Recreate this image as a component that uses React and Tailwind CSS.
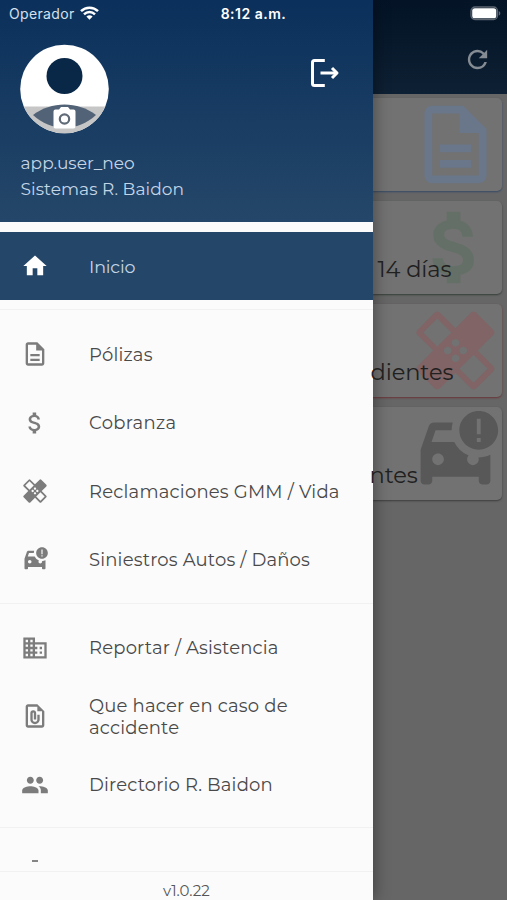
import React from 'react'
import {
  MdHome,
  MdOutlineDescription,
  MdAttachMoney,
  MdHealing,
  MdCarCrash,
  MdBusiness,
  MdOutlineFilePresent,
  MdPeople,
  MdRefresh
} from 'react-icons/md'

const policyItems = [
  { label: 'Pólizas', icon: MdOutlineDescription, text: 'tracking-[0.2px]' },
  { label: 'Cobranza', icon: MdAttachMoney, text: 'tracking-[0.3px]' },
  { label: 'Reclamaciones GMM / Vida', icon: MdHealing, text: 'tracking-[0.22px]' },
  { label: 'Siniestros Autos / Daños', icon: MdCarCrash, text: 'tracking-[0.18px]' }
]

const helpItems = [
  { label: 'Reportar / Asistencia', icon: MdBusiness, text: 'tracking-[0.18px]' },
  { label: 'Que hacer en caso de accidente', icon: MdOutlineFilePresent, text: 'tracking-[0.2px]' },
  { label: 'Directorio R. Baidon', icon: MdPeople, text: 'tracking-[0.18px]' }
]

function StatusBar() {
  return (
    <div className="absolute inset-x-0 top-0 z-20 grid h-[26px] grid-cols-3 items-center pl-[9px] pr-[6px] font-[Inter,sans-serif] text-white">
      <div className="flex items-center gap-[5px]">
        <span className="pt-px text-[14px] tracking-[0.35px] text-[#d5e0ec]">Operador</span>
        <svg className="h-[14px] w-[19px]" viewBox="0 0 19 14" fill="none" stroke="white" strokeWidth="2.5">
          <path d="M1 5.1a12.2 12.2 0 0 1 17 0" />
          <path d="M4 8.3a7.9 7.9 0 0 1 11 0" />
          <path d="M9.5 13.8 6.4 10.6a4.5 4.5 0 0 1 6.2 0z" fill="white" stroke="none" />
        </svg>
      </div>
      <span className="-ml-[3px] pt-px text-center text-[14px] font-semibold tracking-[0.5px]">8:12 a.m.</span>
      <div className="flex justify-end">
        <svg className="h-[15px] w-[31px]" viewBox="0 0 31 15">
          <rect x="1" y="1" width="26.5" height="12.5" rx="4" fill="none" stroke="#5d6671" strokeWidth="1.3" />
          <rect x="2.2" y="2.2" width="24.1" height="10.1" rx="2.6" fill="white" />
          <path d="M28.8 5v4.6c2-.8 2-3.8 0-4.6z" fill="#5d6671" />
        </svg>
      </div>
    </div>
  )
}

function Avatar() {
  return (
    <svg className="h-[90px] w-[90px]" viewBox="0 0 90 90">
      <defs>
        <clipPath id="avatar">
          <circle cx="44.5" cy="45" r="44.3" />
        </clipPath>
      </defs>
      <g clipPath="url(#avatar)">
        <rect width="90" height="90" fill="white" />
        <circle cx="44.5" cy="32" r="18" fill="#092848" />
        <rect y="62.5" width="90" height="28" fill="#c6c6c6" />
        <path d="M13 71C31 57 58 57 76 71 58 88 31 88 13 71z" fill="#536377" />
        <path d="M33.5 67.5q0-2 2-2h3.5l2-2.5h7l2 2.5h3.5q2 0 2 2v15q0 2-2 2h-18q-2 0-2-2z" fill="white" />
        <circle cx="44.5" cy="75" r="4.7" fill="white" stroke="#606b77" strokeWidth="2.2" />
      </g>
    </svg>
  )
}

function MenuItem({ item }) {
  const Icon = item.icon
  return (
    <div className="flex h-[68.5px] items-center pl-[21px]">
      <Icon className="h-7 w-7 shrink-0 text-[#7c7c7c]" />
      <span className={`ml-10 w-[262px] pt-px text-[18px] leading-[22px] text-[#494949] ${item.text}`}>{item.label}</span>
    </div>
  )
}

function Drawer() {
  return (
    <aside className="z-10 flex h-full w-[372.6px] shrink-0 flex-col bg-[#fbfbfb] shadow-[2px_0_14px_rgba(0,0,0,0.35)]">
      <header className="h-[222px] shrink-0 bg-linear-to-b from-[#0a305b] to-[#244769] pl-5 pr-[33px] pt-[44px]">
        <div className="flex items-start justify-between">
          <Avatar />
          <svg className="mt-[14px] h-[30px] w-[30px]" viewBox="0 0 30 30" fill="none" stroke="white" strokeWidth="3" strokeLinejoin="round">
            <path d="M14.8 2.5H4.500q-2 0-2 2v21q0 2 2 2h10.300" />
            <path d="M10.5 15h16" />
            <path d="m22 10 5 5-5 5" />
          </svg>
        </div>
        <div className="mt-[16px] pl-[0.5px] text-[17px] leading-[26px] text-[#c5d5e6]">
          <p className="tracking-[0.05px]">app.user_neo</p>
          <p className="tracking-[0.06px]">Sistemas R. Baidon</p>
        </div>
      </header>

      <div className="mt-[10px] flex h-[68px] shrink-0 items-center bg-[#244769] pl-[21px]">
        <MdHome className="h-7 w-7 text-white" />
        <span className="ml-10 pt-[2px] text-[17.5px] tracking-[-0.15px] text-[#c5d5e6]">Inicio</span>
      </div>

      <nav className="mt-[9px] flex min-h-0 flex-1 flex-col overflow-hidden">
        <div className="shrink-0 border-t border-[#f1f1f1] pb-[9px] pt-[10.1px]">
          {policyItems.map(item => <MenuItem key={item.label} item={item} />)}
        </div>
        <div className="shrink-0 border-t border-[#f1f1f1] pb-[8.3px] pt-[9.3px]">
          {helpItems.map(item => <MenuItem key={item.label} item={item} />)}
        </div>
        <div className="flex-1 border-t border-[#f1f1f1] pl-8 pt-[32px]">
          <div className="h-[2px] w-[6px] bg-[#858585]" />
        </div>
      </nav>

      <footer className="h-[29px] shrink-0 border-t border-[#f1f1f1] pt-[9px] text-center text-[15px] leading-[20px] text-[#555]">
        v1.0.22
      </footer>
    </aside>
  )
}

function Dashboard() {
  return (
    <main className="flex min-w-0 flex-1 flex-col bg-[#666]">
      <header className="flex h-[94px] justify-end bg-linear-to-b from-[#041326] to-[#0e2033] pr-[15px] pt-[45px]">
        <MdRefresh className="h-[29px] w-[29px] text-[#858b93]" />
      </header>
      <section className="flex flex-col gap-[10px] pr-[5px] pt-[4px] text-[22.5px] leading-8 tracking-[-0.1px] text-[#202020]">
        <div className="flex h-[93px] items-center justify-end rounded-r-[5px] bg-[#727272] shadow-[0_1px_2px_#354a66]">
          <MdOutlineDescription className="h-[93px] w-[93px] text-[#6a7689]" />
        </div>
        <div className="grid h-[93px] rounded-r-[5px] bg-[#727272] shadow-[0_1px_2px_#353d38]">
          <MdAttachMoney className="col-start-1 row-start-1 h-[93px] w-[93px] justify-self-end text-[#647067] [&>path:last-child]:stroke-[0.5px] [&>path:first-child]:stroke-none" />
          <span className="z-10 col-start-1 row-start-1 mt-[52px] pl-[5px]">14 días</span>
        </div>
        <div className="grid h-[93px] rounded-r-[5px] bg-[#727272] shadow-[0_1px_2px_#6b3438]">
          <MdHealing className="col-start-1 row-start-1 h-[93px] w-[93px] justify-self-end text-[#806466]" />
          <span className="z-10 col-start-1 row-start-1 -ml-[2px] mt-[52px]">dientes</span>
        </div>
        <div className="grid h-[93px] rounded-r-[5px] bg-[#727272] shadow-[0_1px_2px_#3c3c3c]">
          <MdCarCrash className="col-start-1 row-start-1 h-[93px] w-[93px] justify-self-end text-[#585858]" />
          <span className="z-10 col-start-1 row-start-1 -ml-[3px] mt-[52px]">ntes</span>
        </div>
      </section>
    </main>
  )
}

function App() {
  return (
    <div className="relative flex h-[900px] w-[507px] overflow-hidden font-[Montserrat,Inter,sans-serif]">
      <StatusBar />
      <Drawer />
      <Dashboard />
    </div>
  )
}

export default App
